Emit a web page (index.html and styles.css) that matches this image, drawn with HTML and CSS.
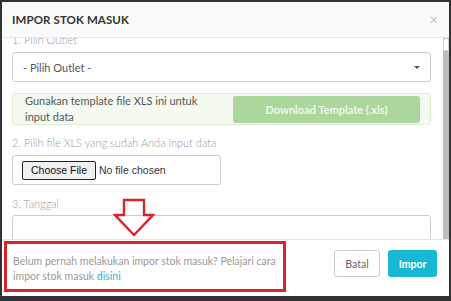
FILE: index.html
```html
<!DOCTYPE html>
<html>
<head>
<meta charset="utf-8">
<link rel="stylesheet" href="styles.css">
</head>
<body>
<div class="backdrop">
  <div class="modal">
    <div class="modal-header">
      <span class="title">IMPOR STOK MASUK</span>
      <span class="close">&times;</span>
    </div>
    <div class="modal-body">
      <div class="scroll-area" id="mb">
        <div class="content">
          <label class="lbl first">1. Pilih Outlet</label>
          <div class="select">
            <span>- Pilih Outlet -</span>
            <span class="caret"></span>
          </div>
          <div class="template">
            <span class="tpl-text">Gunakan template file XLS ini untuk input data</span>
            <span class="dl-btn">Download Template (.xls)</span>
          </div>
          <label class="lbl second">2. Pilih file XLS yang sudah Anda input data</label>
          <div class="file-box">
            <span class="choose">Choose File</span>
            <span class="nofile">No file chosen</span>
          </div>
          <label class="lbl third">3. Tanggal</label>
          <div class="date-box"></div>
        </div>
      </div>
      <div class="scrollbar">
        <div class="sb-button"></div>
        <div class="sb-thumb"></div>
      </div>
    </div>
    <div class="modal-footer">
      <div class="help">Belum pernah melakukan impor stok masuk? Pelajari cara impor stok masuk <span class="link">disini</span></div>
      <div class="actions">
        <span class="btn btn-cancel">Batal</span>
        <span class="btn btn-primary">Impor</span>
      </div>
    </div>
    <svg class="arrow" width="42" height="40" viewBox="0 0 42 40">
      <path d="M11 2 H31 V17 H40 L21 37 L2 17 H11 Z" fill="none" stroke="#d9242c" stroke-width="2.4" stroke-linejoin="miter"/>
    </svg>
  </div>
</div>
<script src="script.js"></script>
</body>
</html>
```
FILE: script.js
```js
var mb = document.getElementById('mb');
mb.scrollTop = 19;
```
FILE: styles.css
```css
* { box-sizing: border-box; }
html, body { margin: 0; padding: 0; }
body {
  width: 451px;
  height: 301px;
  overflow: hidden;
  background: #323232;
  font-family: Lato, "Open Sans", sans-serif;
}
.backdrop {
  padding: 2px 2px 5px 2px;
  height: 301px;
}
.modal {
  position: relative;
  background: #fff;
  height: 294px;
  display: flex;
  flex-direction: column;
}
.modal-header {
  height: 36px;
  flex: none;
  background: #fafafa;
  border-bottom: 1px solid #e6e6e6;
  display: flex;
  align-items: center;
  justify-content: space-between;
  padding: 0 11px 0 10px;
}
.title {
  font-size: 11.5px;
  font-weight: 700;
  color: #333;
  letter-spacing: 0.1px;
}
.close {
  font-size: 15px;
  color: #c4c4c4;
  line-height: 1;
}
.modal-body {
  height: 201px;
  flex: none;
  display: flex;
}
.scroll-area {
  flex: 1;
  overflow: hidden;
}
.scrollbar {
  width: 6px;
  flex: none;
  display: flex;
  flex-direction: column;
  background: #c1c1c1;
}
.sb-button {
  height: 13px;
  background: #fff;
  border: 1px solid #d6d6d6;
  border-radius: 3px 3px 0 0;
}
.sb-thumb {
  flex: 1;
  background: #bdbdbd;
}
.content {
  padding: 13px 12px 0 10px;
  display: flex;
  flex-direction: column;
}
.lbl {
  font-size: 11px;
  color: #999;
  line-height: 16px;
  font-weight: 300;
}
.first { margin-bottom: 4px; }
.second { margin-top: 10px; margin-bottom: 4px; }
.third { margin-top: 11px; margin-bottom: 3px; }
.select {
  height: 30px;
  border: 1px solid #ccc;
  border-radius: 3px;
  display: flex;
  align-items: center;
  justify-content: space-between;
  padding: 0 10px 0 10px;
  font-size: 11px;
  color: #555;
}
.caret {
  width: 0; height: 0;
  border-left: 3px solid transparent;
  border-right: 3px solid transparent;
  border-top: 3px solid #555;
}
.template {
  margin-top: 11px;
  height: 32px;
  border: 1px solid #dcedd3;
  background: #f4faf0;
  border-radius: 3px;
  display: flex;
  align-items: center;
  padding: 0 10px 0 12px;
  gap: 8px;
}
.tpl-text {
  flex: 1;
  max-width: 185px;
  font-size: 11px;
  line-height: 16px;
  color: #555;
}
.dl-btn {
  margin-left: auto;
  width: 187px;
  height: 27px;
  background: #acd79c;
  border-radius: 3px;
  color: #eef8ea;
  font-size: 11px;
  font-weight: 700;
  display: flex;
  align-items: center;
  justify-content: center;
}
.file-box {
  width: 209px;
  height: 30px;
  border: 1px solid #ccc;
  border-radius: 3px;
  display: flex;
  align-items: center;
  padding-left: 9px;
  font-family: "Liberation Sans", Arial, sans-serif;
  font-size: 10.5px;
}
.choose {
  border: 1px solid #222;
  border-radius: 2px;
  background: #f0f0f0;
  padding: 1px 8px;
  color: #111;
  height: 19px;
  display: flex;
  align-items: center;
}
.nofile { margin-left: 3px; color: #333; }
.date-box {
  height: 30px;
  border: 1px solid #ccc;
  border-radius: 3px;
}
.modal-footer {
  flex: 1;
  border-top: 1px solid #e4e4e4;
  display: flex;
  justify-content: space-between;
  align-items: flex-start;
  padding: 1px 12px 0 2px;
}
.help {
  width: 282px;
  height: 51px;
  border: 3px solid #d9242c;
  padding: 10px 6px 0 6px;
  font-size: 10.5px;
  line-height: 15px;
  color: #999;
}
.link { color: #2bb5cf; }
.actions {
  display: flex;
  gap: 8px;
  margin-top: 9px;
}
.btn {
  height: 27px;
  border-radius: 3px;
  display: flex;
  align-items: center;
  justify-content: center;
  font-size: 10.5px;
}
.btn-cancel {
  width: 46px;
  border: 1px solid #ccc;
  color: #666;
  background: #fff;
}
.btn-primary {
  width: 49px;
  background: #19b8d2;
  color: #fff;
  font-weight: 700;
}
.arrow {
  position: absolute;
  left: 111px;
  top: 196px;
}
```
